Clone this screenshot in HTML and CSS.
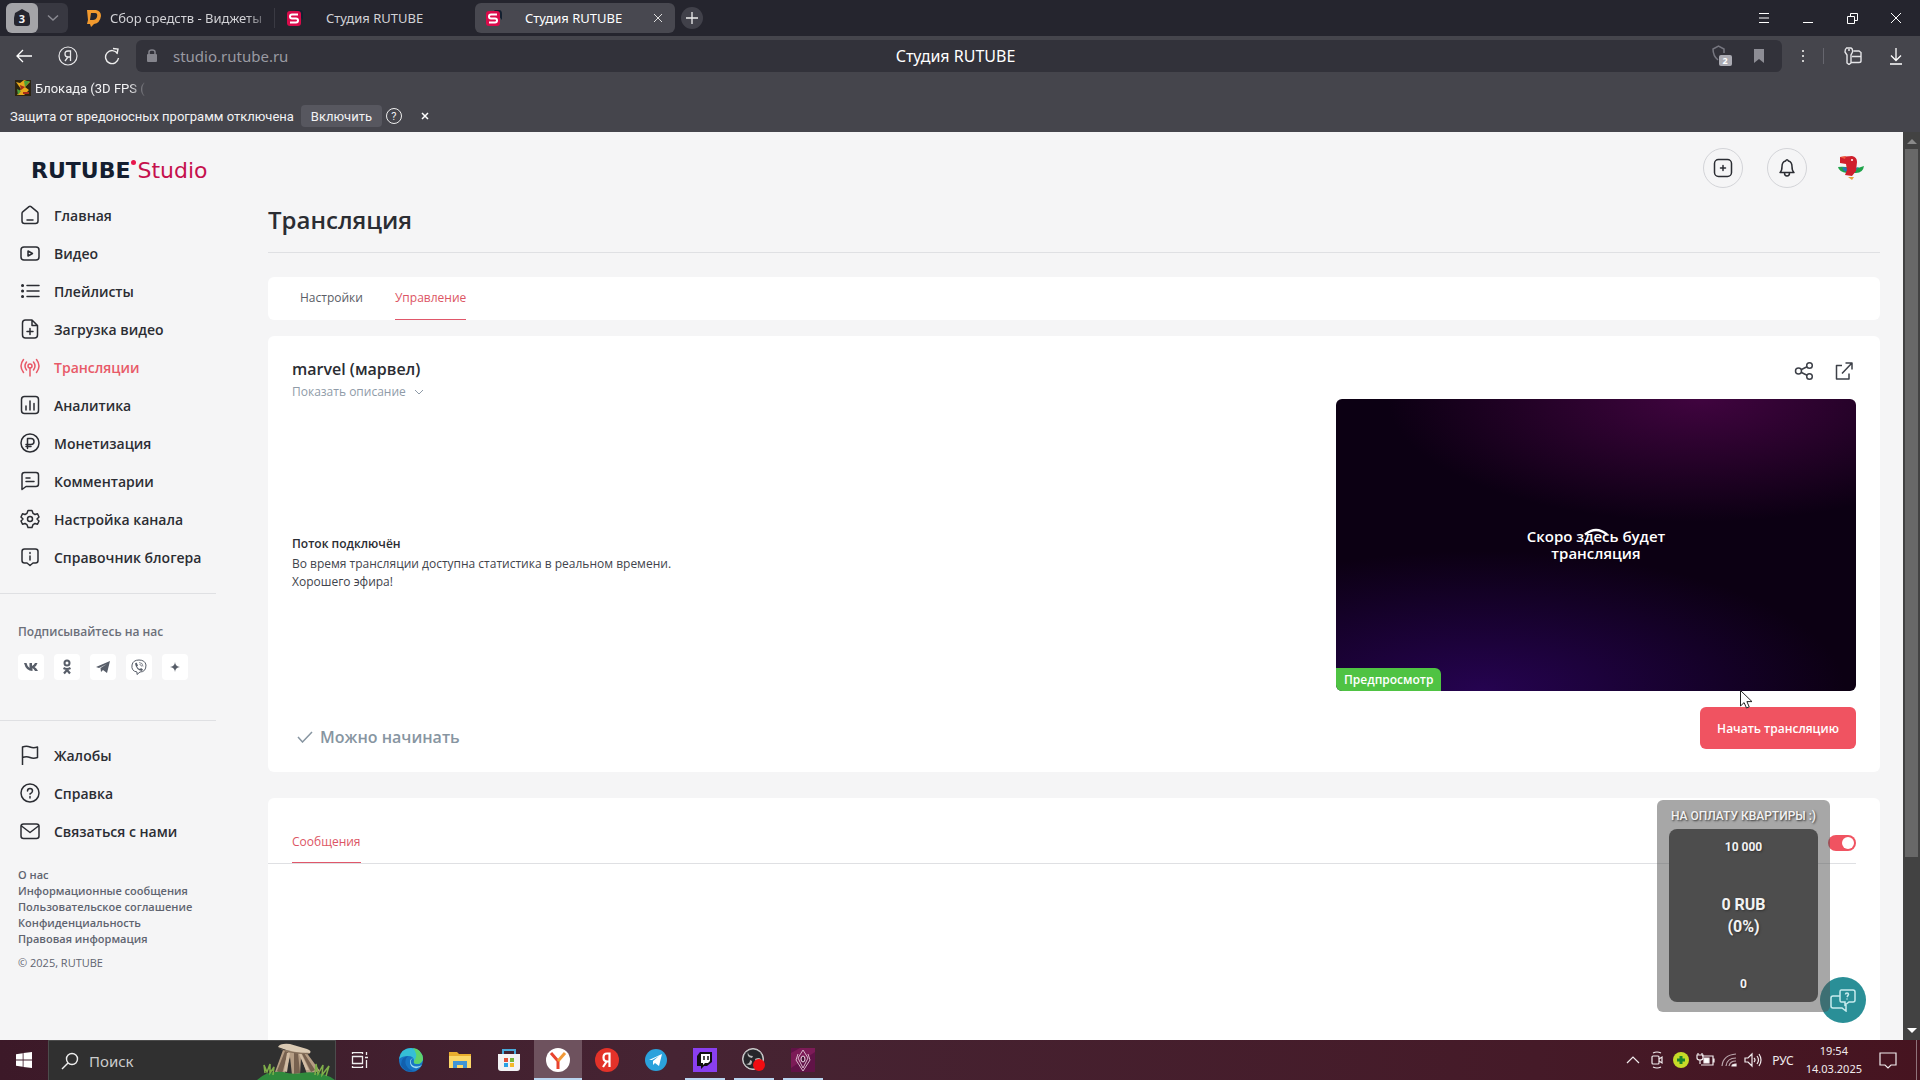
FILE: index.html
```html
<!DOCTYPE html>
<html lang="ru">
<head>
<meta charset="utf-8">
<title>Студия RUTUBE</title>
<link rel="stylesheet" href="styles.css">
</head>
<body>
<div class="screen">
<header class="browser">
  <div class="tabbar">
    <div class="tab-group">
      <button class="group-count" aria-label="Вкладки"><svg width="18" height="18" viewBox="0 0 18 18"><path d="M9 0l7 4 1 5v5q0 3-3 3H4q-3 0-3-3V9l1-5z" fill="#25252e"/></svg><b>3</b></button>
      <button class="group-more" aria-label="Список"><svg width="12" height="8" viewBox="0 0 12 8"><path d="M1 1.500l5 4.500 5-4.500" fill="none" stroke="#8a8a92" stroke-width="1.500"/></svg></button>
    </div>
    <a class="tab tab-first" href="#"><svg width="16" height="18" viewBox="0 0 16 18"><path d="M1 1h9q5 1 5 6-1 7-7 8l-3 3-1-3H1l1-4z" fill="#f29a2e"/><path d="M5 4h4q3 0 2 4-1 3-4 3H4z" fill="#25252e"/></svg><span class="fade">Сбор средств - Виджеты</span></a>
    <a class="tab tab-second" href="#"><svg width="16" height="16" viewBox="0 0 16 16"><path d="M8 0h5q3 0 3 4v6z" fill="#142030"/><rect y="1" width="14" height="15" rx="3" fill="#d90b4b"/><path d="M11 5H5q-2 0-2 2t2 2h4q2 0 2 2t-2 2H3" transform="translate(0 -.5)" fill="none" stroke="#fff" stroke-width="2"/></svg><span>Студия RUTUBE</span></a>
    <div class="tab tab-active"><svg width="16" height="16" viewBox="0 0 16 16"><path d="M8 0h5q3 0 3 4v6z" fill="#142030"/><rect y="1" width="14" height="15" rx="3" fill="#d90b4b"/><path d="M11 5H5q-2 0-2 2t2 2h4q2 0 2 2t-2 2H3" transform="translate(0 -.5)" fill="none" stroke="#fff" stroke-width="2"/></svg><span>Студия RUTUBE</span><button aria-label="Закрыть вкладку"><svg width="8" height="8" viewBox="0 0 8 8"><path d="M0 0l8 8M8 0L0 8" stroke="#ddd"/></svg></button></div>
    <button class="new-tab" aria-label="Новая вкладка"><svg width="12" height="12" viewBox="0 0 12 12"><path d="M6 0v12M0 6h12" stroke="#eee" stroke-width="1.300"/></svg></button>
    <div class="window-buttons">
      <button aria-label="Меню"><svg width="12" height="12" viewBox="0 0 12 12"><path d="M1 1.500h10M1 6h10M1 10.500h10" stroke="#fff"/></svg></button>
      <button aria-label="Свернуть"><svg width="12" height="12" viewBox="0 0 12 12"><path d="M1 10.500h10" stroke="#fff"/></svg></button>
      <button aria-label="Развернуть"><svg width="12" height="12" viewBox="0 0 12 12"><path d="M1.500 4.500h7v7h-7zM4.500 4V1.500h7v7H9" fill="none" stroke="#fff"/></svg></button>
      <button aria-label="Закрыть"><svg width="12" height="12" viewBox="0 0 12 12"><path d="M1 1l10 10M11 1L1 11" stroke="#fff"/></svg></button>
    </div>
  </div>
  <div class="toolbar">
    <button aria-label="Назад"><svg width="16" height="14" viewBox="0 0 16 14"><path d="M16 7H1.500M7 1L1 7l6 6" fill="none" stroke="#fff" stroke-width="1.300"/></svg></button>
    <button aria-label="Яндекс"><svg width="20" height="20" viewBox="0 0 20 20"><circle cx="10" cy="10" r="9" fill="none" stroke="#e8e8ea" stroke-width="1.200"/><path d="M12.500 15V5H10q-3 0-3 3t3 3h2.500M10 11l-3 4" fill="none" stroke="#e8e8ea" stroke-width="1.300"/></svg></button>
    <button aria-label="Обновить"><svg width="16" height="18" viewBox="0 0 16 18"><path d="M13.500 6A6.500 6.500 0 1 0 14.500 10.500M9 1l5 .5-1 5" transform="translate(0 .5)" fill="none" stroke="#eee" stroke-width="1.400"/></svg></button>
    <div class="address">
      <div class="url">
        <svg width="10" height="14" viewBox="0 0 10 14"><rect y="5" width="10" height="8" rx="1" fill="#85858d"/><path d="M2 6V3q0-2 3-2t3 2v3" fill="none" stroke="#85858d" stroke-width="1.500"/></svg>
        <input aria-label="Адрес" value="studio.rutube.ru">
      </div>
      <span class="page-name">Студия RUTUBE</span>
      <div class="address-icons">
        <svg width="20" height="22" viewBox="0 0 20 22"><path d="M6 15Q1 11 1 4l5.500-3L12 4v4" fill="none" stroke="#777780" stroke-width="1.500"/><rect x="7" y="10" width="13" height="11" rx="2" fill="#aaaab2"/><text x="13" y="19" font-size="9" font-weight="700" text-anchor="middle" fill="#fff">2</text></svg>
        <svg width="10" height="14" viewBox="0 0 10 14"><path d="M0 0h10v14l-5-4-5 4z" fill="#8d8d95"/></svg>
      </div>
    </div>
    <div class="toolbar-right">
      <svg width="4" height="14" viewBox="0 0 4 14"><path d="M1 1h2v2H1zM1 6h2v2H1zM1 11h2v2H1z" fill="#ccc"/></svg>
      <i></i>
      <svg class="tool-a" width="18" height="18" viewBox="0 0 18 18"><path d="M2.500 1h4.500q2 1 1.500 4L7 8v8l-2 1.500L3 16V8L1 5q0-3 1.500-4zM4 3h2M9.500 4H15l2 1.500V14q0 1.500-2 1.500H7.500M8 9.500h9" fill="none" stroke="#e5e5e8" stroke-width="1.400"/></svg>
      <svg class="tool-b" width="14" height="18" viewBox="0 0 14 18"><path d="M7 1v12M2 8.500l5 5 5-5M1 17h12" fill="none" stroke="#fff" stroke-width="1.300"/></svg>
    </div>
  </div>
  <div class="bookmarks">
    <svg width="16" height="16" viewBox="0 0 16 16"><path d="M0 0h16v16H0z" fill="#2c2412"/><path d="M1 2l4 1 4-3 6 2-5 5 4 3-5 5H2l4-6z" fill="#e8a81c"/><path d="M9 1h6l-5 6zM2 9l4 2-3 4z" fill="#4da03a"/><path d="M5 5l5 2-4 3zM8 12h6v2H8z" fill="#a82c18"/></svg>
    <a class="fade" href="#">Блокада (3D FPS (</a>
  </div>
  <div class="notice">
    <span>Защита от вредоносных программ отключена</span>
    <button class="enable">Включить</button>
    <button class="help" aria-label="Помощь">?</button>
    <button class="dismiss" aria-label="Закрыть"><svg width="8" height="8" viewBox="0 0 8 8"><path d="M1 1l6 6M7 1L1 7" stroke="#fff" stroke-width="1.500"/></svg></button>
  </div>
</header>

<div class="page">
  <aside class="sidebar">
    <a class="logo" href="#"><b>RUTUBE</b><i></i><span>Studio</span></a>
    <nav class="nav">
      <a href="#"><svg viewBox="0 0 20 20"><path d="M2 8.500q0-1 1-1.800l6-5q1-.8 2 0l6 5q1 .8 1 1.800V16q0 2.500-2.500 2.500h-11Q2 18.500 2 16zM7 15h6"/></svg>Главная</a>
      <a href="#"><svg viewBox="0 0 20 20"><rect x="1" y="4" width="18" height="13" rx="3"/><path d="M8 8v5l4.500-2.500z"/></svg>Видео</a>
      <a href="#"><svg viewBox="0 0 20 20"><path d="M7 4.500h12M7 10h12M7 15.500h12"/><path d="M2.500 4.500h.1M2.500 10h.1M2.500 15.500h.1" stroke-width="3"/></svg>Плейлисты</a>
      <a href="#"><svg viewBox="0 0 20 20"><path d="M12 1H5.500Q2.500 1 2.500 4v12q0 3 3 3h9q3 0 3-3V6.500zM12 1v5.500h5.500M10 9.500v6M7 12.500h6"/></svg>Загрузка видео</a>
      <a class="current" href="#"><svg viewBox="0 0 20 20"><circle cx="10" cy="9" r="2"/><path d="M10 11v8M6.500 13q-3-4 0-8M13.500 13q3-4 0-8M3.500 15.500q-5-6.500 0-13M16.500 15.500q5-6.500 0-13"/></svg>Трансляции</a>
      <a href="#"><svg viewBox="0 0 20 20"><rect x="1.500" y="1.500" width="17" height="17" rx="3"/><path d="M6 11v4M10 6v9M14 8.500V15"/></svg>Аналитика</a>
      <a href="#"><svg viewBox="0 0 20 20"><circle cx="10" cy="10" r="9"/><path d="M7.500 15.500v-10h3.500q3 0 3 3t-3 3H6M6 13.500h5"/></svg>Монетизация</a>
      <a href="#"><svg viewBox="0 0 20 20"><path d="M2 18.500V4q0-2.500 2.500-2.500h11.500q2.500 0 2.500 2.500v9q0 2.500-2.500 2.500H6zM6 7h4M6 10.500h8"/></svg>Комментарии</a>
      <a href="#"><svg viewBox="0 0 20 20"><circle cx="10" cy="10" r="2.500"/><path d="M8 1.500h4l1 2.800 2 1.200 2.500-.8L19 8l-2 2 2 2-1.500 3.300-2.500-.8-2 1.200-1 2.800H8l-1-2.800-2-1.200-2.500.8L1 12l2-2-2-2 1.500-3.300 2.500.8 2-1.200z"/></svg>Настройка канала</a>
      <a href="#"><svg viewBox="0 0 20 20"><path d="M4.500 2h11Q18 2 18 4.500v9q0 2.500-2.500 2.500H13l-3 2.500L7 16H4.500Q2 16 2 13.500v-9Q2 2 4.500 2zM10 9v4M10 5.500v1"/></svg>Справочник блогера</a>
    </nav>
    <section class="follow">
      <p>Подписывайтесь на нас</p>
      <div class="social">
        <a href="#" aria-label="ВКонтакте"><svg viewBox="0 0 16 16"><path d="M1 4h2.500q1 4 3 5V4H9v3q2-1 3-3h2.500q-1 3-3 4 2 1 3.500 4h-3q-1-2-2.500-3v3Q3 12 1 4z"/></svg></a>
        <a href="#" aria-label="Одноклассники"><svg viewBox="0 0 16 16"><circle cx="8" cy="4" r="2.500" fill="none" stroke="#575d68" stroke-width="2"/><path d="M4.500 9q3.500 2 7 0M5 14.500l3-3.500 3 3.500" fill="none" stroke="#575d68" stroke-width="2.200"/></svg></a>
        <a href="#" aria-label="Telegram"><svg viewBox="0 0 16 16"><path d="M1 8l14-6-3 12-4-3-2 2-.5-4L12 5 4 9z"/></svg></a>
        <a href="#" aria-label="Viber"><svg viewBox="0 0 16 16"><path d="M8 1q6 0 7 5 0 7-6 7l-3 2.500V13Q0 12 1 6 2 1 8 1z" fill="none" stroke="#575d68"/><path d="M4 4.500l1.500-1 1.500 3-1 1q1 2 3 2.500l1-1 2 1.500-1 1.500q-6-1-7-7.500z"/><path d="M8 3.500q4 0 4 4M8.500 5.500q2 0 2 2" fill="none" stroke="#575d68" stroke-width=".7"/></svg></a>
        <a href="#" aria-label="Дзен"><svg viewBox="0 0 16 16"><path d="M8 3q.3 4.700 5 5-4.700.3-5 5-.3-4.700-5-5 4.700-.3 5-5z"/></svg></a>
      </div>
    </section>
    <nav class="nav nav-help">
      <a href="#"><svg viewBox="0 0 20 20"><path d="M2.500 20V2q4-1.500 7.500 0t7.500 0v10.500q-4 1.500-7.500 0t-7.500 0"/></svg>Жалобы</a>
      <a href="#"><svg viewBox="0 0 20 20"><circle cx="10" cy="10" r="9"/><path d="M7.500 8q0-2.500 2.500-2.500T12.500 8q0 1.500-2.500 3M10 13.500v1.500"/></svg>Справка</a>
      <a href="#"><svg viewBox="0 0 20 20"><rect x="1" y="3" width="18" height="14.500" rx="2.500"/><path d="M1.500 5l8.500 6.500L18.500 5"/></svg>Связаться с нами</a>
    </nav>
    <footer class="legal">
      <a href="#">О нас</a><a href="#">Информационные сообщения</a><a href="#">Пользовательское соглашение</a><a href="#">Конфиденциальность</a><a href="#">Правовая информация</a>
      <p>© 2025, RUTUBE</p>
    </footer>
  </aside>

  <main class="main">
    <div class="account">
      <button aria-label="Добавить"><svg width="20" height="20" viewBox="0 0 20 20"><rect x="1.500" y="1.500" width="17" height="17" rx="4"/><path d="M10 7.500v5M7.500 10h5"/></svg></button>
      <button aria-label="Уведомления"><svg width="20" height="20" viewBox="0 0 20 20"><path d="M3 14.500q2-1.500 2-6 0-4.500 3.500-5.500Q10 .5 11.500 3 15 4 15 8.500q0 4.500 2 6zM7.500 15q0 3 2.500 3t2.500-3"/></svg></button>
      <a href="#" aria-label="Профиль"><svg width="28" height="26" viewBox="0 0 28 26"><path d="M1 12q6-1 12 1 7 1 14-2-1 7-8 7h-9q-8-1-9-6z" fill="#1fa34a"/><path d="M5 12l6 1 1 4-5-1z" fill="#2775b8"/><path d="M17 13l5-1-4 5z" fill="#1d8f9a"/><path d="M3 2l12-1q5 1 5 6l-1 9-4 5-7-1 2-5-1-6-6-1z" fill="#cf1f2c"/><path d="M3 2l6-1-1 3z" fill="#f05a3c"/><circle cx="15" cy="5" r="1" fill="#fff"/><path d="M11 22l6 0-2 3z" fill="#e9a13a"/></svg></a>
    </div>
    <h1>Трансляция</h1>
    <nav class="tabs"><a href="#">Настройки</a><a class="selected" href="#">Управление</a></nav>
    <section class="card stream">
      <div class="info">
        <h2>marvel (марвел)</h2>
        <button class="description">Показать описание <svg width="10" height="6" viewBox="0 0 10 6"><path d="M1 1l4 4 4-4" fill="none" stroke="#8f9ba8"/></svg></button>
        <div class="status"><b>Поток подключён</b><p>Во время трансляции доступна статистика в реальном времени.<br>Хорошего эфира!</p></div>
        <p class="ready"><svg width="16" height="12" viewBox="0 0 16 12"><path d="M1 6l4.500 5L15 1" fill="none" stroke="#8795a1" stroke-width="1.500"/></svg>Можно начинать</p>
      </div>
      <div class="preview">
        <div class="share">
          <button aria-label="Поделиться"><svg width="20" height="20" viewBox="0 0 20 20"><circle cx="4.500" cy="10" r="3"/><circle cx="15.500" cy="4.500" r="2.800"/><circle cx="15.500" cy="15.500" r="2.800"/><path d="M7 8.700L13 5.800M7 11.300l6 2.900"/></svg></button>
          <button aria-label="Открыть"><svg width="20" height="20" viewBox="0 0 20 20"><path d="M8 4.500H2.500V18h12.500v-5.500M8 12.500L17.500 2.500M11.500 2h6.500v6.500"/></svg></button>
        </div>
        <div class="video">
          <p>Скоро здесь будет<br>трансляция</p>
          <svg class="spinner" width="26" height="8" viewBox="0 0 26 8"><path d="M2 6.500q11-9 22 0" fill="none" stroke="#fff" stroke-width="2.500"/></svg>
          <span class="badge">Предпросмотр</span>
        </div>
        <button class="start">Начать трансляцию</button>
        <svg class="cursor" width="13" height="19" viewBox="0 0 13 19"><path d="M.5.500V16l3.600-3.400L6.500 18l2.700-1.200L6.900 11.600H12z" fill="#fff" stroke="#222"/></svg>
      </div>
    </section>
    <section class="card chat">
      <div class="chat-head"><a href="#">Сообщения</a><label><input type="checkbox" checked aria-label="Чат"></label></div>
    </section>
  </main>

  <div class="scrollbar"><svg width="10" height="5" viewBox="0 0 10 5"><path d="M0 5l5-5 5 5z" fill="#8a8a8a"/></svg><div class="track"><div class="thumb"></div></div><svg width="10" height="5" viewBox="0 0 10 5"><path d="M0 0l5 5 5-5z" fill="#fff"/></svg></div>

  <button class="support" aria-label="Поддержка"><svg width="26" height="24" viewBox="0 0 26 24" fill="none" stroke="#c8ecee" stroke-width="1.500"><path d="M11 2h12q2 0 2 2v8q0 2-2 2h-4l-4 3v-3h-4q-1 0-1-2V4q0-2 1-2zM10 8H3Q1 8 1 10v8q0 2 2 2h9l4 3v-6"/><path d="M15.500 6.500q0-1.500 1.500-1.500t1.500 1.500L17 9M17 10.500v1"/></svg></button>
  <aside class="goal">
    <h3>НА ОПЛАТУ КВАРТИРЫ :)</h3>
    <div><span>10 000</span><strong>0 RUB<br>(0%)</strong><span>0</span></div>
  </aside>
</div>

<footer class="taskbar">
  <button class="win" aria-label="Пуск"><svg width="16" height="16" viewBox="0 0 16 16"><path d="M0 2.200l6.700-1V7.600H0zM7.500 1L16 0v7.600H7.500zM0 8.400h6.700v6.400L0 13.800zM7.500 8.400H16V16l-8.500-1.100z" fill="#fff"/></svg></button>
  <label class="search">
    <svg width="18" height="18" viewBox="0 0 18 18"><circle cx="11" cy="7" r="5.500" fill="none" stroke="#eee" stroke-width="1.400"/><path d="M7 11l-6 6" stroke="#eee" stroke-width="1.400"/></svg>
    <input placeholder="Поиск" aria-label="Поиск">
    <svg class="stone" width="78" height="38" viewBox="0 0 78 38"><path d="M26 8l-8 22 9 4 6-19 2 18h8l1-18 6 17 13-3L49 10z" fill="#b59d84"/><path d="M28 9l-8 20 5 3 6-22zM37 11l0 21 6-1-2-20zM45 12l9 18 4-2-11-17z" fill="#77614f"/><path d="M30 11l-3 18 3 1 3-19zM42 12l7 16 3 0-8-17z" fill="#d2bda4"/><path d="M21 5q2-4 12-3l17 5q5 2 3 4-18 0-32-6z" fill="#dbcab3"/><path d="M21 6q13 5 32 5 0 2-5 1-16 0-27-6z" fill="#85705c"/><path d="M0 38q10-10 26-8 10 3 18 1 20-3 34 7z" fill="#2f8a3c"/><path d="M8 31l-1-8 3 7 3-8v9l4-6-1 8M58 33l1-11 2 10 5-9-1 10 7-9-3 10" fill="none" stroke="#7fae4a" stroke-width="1.500"/></svg>
  </label>
  <div class="apps">
    <button class="task-view" aria-label="Задачи"><svg width="18" height="16" viewBox="0 0 18 16"><path d="M1.500 4.500h10v7h-10zM1.500 2V.5h10V2M1.500 14v1.500h10V14M15.500 0v3M15.500 8v8M14 5.500h3" fill="none" stroke="#eee" stroke-width="1.300"/></svg></button>
    <button aria-label="Edge"><svg width="24" height="24" viewBox="0 0 24 24"><circle cx="12" cy="12" r="12" fill="#1875c5"/><path d="M0 11Q2 0 12 0q11 1 12 11-1 5-6 5-4 0-3-3 0-5-6-5-6 0-9 3z" fill="#35bfd6"/><path d="M14 0q9 1 10 11-1 5-6 5-4 0-3-3 5-6-1-13z" fill="#5fd36b"/><path d="M9 8q-4 4-2 9 3 6 10 6-10 3-15-6 0-8 7-9z" fill="#1260ad"/><path d="M14 10q-4 3-1 7 4 3 10 0-3 4-7 3-5-1-5-6 0-3 3-4z" fill="#9bdcf2"/></svg></button>
    <button aria-label="Проводник"><svg width="22" height="18" viewBox="0 0 22 18"><path d="M0 1h8l2 2h12v14H0z" fill="#e9ad2e"/><path d="M0 5h22v12H0z" fill="#fbd768"/><path d="M4 17v-7h14v7h-4v-3H8v3z" fill="#3f94d6"/></svg></button>
    <button aria-label="Store"><svg width="24" height="24" viewBox="0 0 24 24"><path d="M6 7V2h12v5" fill="none" stroke="#49a9da" stroke-width="2"/><path d="M1 6h22v14q0 3-3 3H4q-3 0-3-3z" fill="#f2f2f4"/><path d="M7 10h4v4H7z" fill="#e2503a"/><path d="M13 10h4v4h-4z" fill="#78b83a"/><path d="M7 15h4v4H7z" fill="#2aa0e4"/><path d="M13 15h4v4h-4z" fill="#f3b928"/></svg></button>
    <button class="active" aria-label="Яндекс Браузер"><svg width="24" height="24" viewBox="0 0 24 24"><circle cx="12" cy="12" r="12" fill="#fff"/><path d="M5 5l7 8v8" fill="none" stroke="#e8432e" stroke-width="3"/><path d="M19 5l-7 8" stroke="#f29a38" stroke-width="3"/></svg></button>
    <button aria-label="Яндекс"><svg width="24" height="24" viewBox="0 0 24 24"><circle cx="12" cy="12" r="12" fill="#e33229"/><path d="M14.500 19V5.500H12q-3.500 0-3.500 4t4 4h2M12 13l-4 6" fill="none" stroke="#fff" stroke-width="2.200"/></svg></button>
    <button aria-label="Telegram"><svg width="22" height="22" viewBox="0 0 22 22"><circle cx="11" cy="11" r="11" fill="#2ba2dc"/><path d="M4 11l13-6-3 12-4-3-2 2v-4l6-5-7 4z" fill="#fff"/></svg></button>
    <button class="open" aria-label="Twitch"><svg width="24" height="24" viewBox="0 0 24 24"><path d="M0 0h24v24H0z" fill="#8a3ff0"/><path d="M7 4h12v10l-5 4h-3l-3 3v-3H4V8z" fill="#111"/><path d="M8 6h9v7l-2 2h-3l-2 2v-2H8z" fill="#fff"/><path d="M11 8v4M15 8v4" stroke="#111" stroke-width="1.500"/></svg></button>
    <button class="open" aria-label="OBS"><svg width="24" height="24" viewBox="0 0 24 24"><circle cx="11" cy="11" r="10.500" fill="#b8b8ba" stroke="#d0d0d0"/><circle cx="11" cy="11" r="9.500" fill="#26262a"/><path d="M10 10q-6-1-4-6 0 4 5 4zM13 11q6-3 7 3-3-3-6 0zM10 13q0 6-6 3 4 0 4-4z" fill="#b8b8b8"/><circle cx="17" cy="17" r="6" fill="#f00d12"/></svg></button>
    <button class="open" aria-label="Игра"><svg width="24" height="24" viewBox="0 0 24 24"><path d="M0 0h24v24H0z" fill="#611347"/><path d="M0 5L9 0h15v4L0 20z" fill="#7c1b57"/><path d="M12 2L7 10l5 10 5-10zM7 6l-2 6 7 11 7-11-2-6" fill="none" stroke="#d9b6cb"/><ellipse cx="12" cy="11" rx="2" ry="3" fill="#421034" stroke="#f4e2ee"/></svg></button>
  </div>
  <div class="tray">
    <svg viewBox="0 0 20 20"><path d="M4 13l6-6 6 6"/></svg>
    <svg viewBox="0 0 20 20"><rect x="5" y="6" width="7" height="8" rx="1"/><path d="M12 9l3-2v6l-3-2M6 3q4-2 8 0M6 17q4 2 8 0"/></svg>
    <svg viewBox="0 0 20 20"><circle cx="10" cy="10" r="8" fill="#c6db28" stroke="none"/><path d="M10 6v8M6 10h8" stroke="#19832c" stroke-width="3"/></svg>
    <svg viewBox="0 0 20 20"><path d="M7 6h11v9H6M18 9h1v3h-1M2 5h6v3q0 2-3 2t-3-2zM3 3v2M7 3v2M5 10v4"/><path d="M9 8h5v5H9z" fill="#fff"/></svg>
    <svg viewBox="0 0 20 20"><path d="M3 16Q4 5 17 4M7 16q1-8 10-8M10 16q1-5 7-5" stroke="#bda8ae"/><path d="M13 16q0-2 4-2v2z" fill="#fff"/></svg>
    <svg viewBox="0 0 20 20"><path d="M2 8h3l4-4v12l-4-4H2zM11 8q2 2 0 4M14 6q3 4 0 8M16 4q4 6 0 12"/></svg>
    <span class="lang">РУС</span>
    <time>19:54<br>14.03.2025</time>
    <svg class="message" viewBox="0 0 20 20"><path d="M2 3h16v12h-5l-3 3-3-3H2z"/></svg>
    <i></i>
  </div>
</footer>
</div>
</body>
</html>
```
FILE: styles.css
```css
* { box-sizing: border-box; }
body { margin: 0; font-family: "Open Sans", sans-serif; font-size: 12px; color: #2b2d33; }
h1, h2, h3, p { margin: 0; }
a { color: inherit; text-decoration: none; }
button { padding: 0; border: 0; background: none; color: inherit; font: inherit; display: flex; align-items: center; justify-content: center; }
input { font: inherit; color: inherit; border: 0; background: none; padding: 0; min-width: 0; outline: 0; }
svg { flex: none; display: block; }

.screen { height: 100vh; display: flex; flex-direction: column; overflow: hidden; }

/* Browser window */
.browser { background: #45454c; color: #f2f2f4; font-family: "Noto Sans", sans-serif; }
.tabbar { height: 36px; padding: 0 2px 0 6px; display: flex; align-items: center; background: #25252e; font-size: 13px; }
.tab-group { display: flex; width: 62px; height: 30px; border-radius: 6px; background: #383841; }
.group-count { position: relative; width: 32px; border-radius: 6px; background: #a4a4a8; }
.group-count b { position: absolute; font-size: 11px; }
.group-more { flex: 1; }
.tab { display: flex; align-items: center; height: 30px; color: #d2d2d6; }
.tab-first { width: 207px; padding-left: 18px; gap: 8px; border-right: 1px solid #3a3a43; height: 20px; }
.fade { overflow: hidden; white-space: nowrap; mask-image: linear-gradient(90deg, #000 84%, transparent); }
.tab-first .fade { width: 162px; }
.tab-second { width: 200px; padding-left: 12px; gap: 23px; }
.tab-active { width: 200px; padding: 0 13px 0 11px; gap: 23px; border-radius: 6px; background: #484850; color: #fff; }
.tab-active button { margin-left: auto; }
.new-tab { width: 22px; height: 22px; margin-left: 6px; border-radius: 50%; background: #41414a; }
.window-buttons { display: flex; margin-left: auto; }
.window-buttons button { width: 44px; height: 36px; }
.toolbar { height: 40px; display: flex; align-items: center; padding-left: 2px; }
.toolbar > button { width: 44px; height: 32px; }
.address { flex: 1; height: 32px; margin-left: 2px; padding: 0 18px 0 11px; border-radius: 6px; background: #32323a; display: grid; grid-template-columns: 1fr auto 1fr; align-items: center; font-size: 15px; }
.url { display: flex; align-items: center; gap: 16px; color: #9a9aa2; }
.page-name { color: #fff; font-size: 16px; }
.address-icons { display: flex; justify-content: flex-end; align-items: center; gap: 22px; }
.toolbar-right { width: 138px; display: flex; align-items: center; padding-left: 19px; }
.toolbar-right i { width: 1px; height: 16px; margin: 0 20px 0 18px; background: #66666e; }
.tool-b { margin-left: 27px; }
.bookmarks, .notice { font-family: "Roboto", sans-serif; font-size: 13px; }
.bookmarks { height: 24px; padding-left: 15px; display: flex; align-items: center; gap: 4px; }
.bookmarks .fade { width: 112px; }
.notice { height: 32px; padding-left: 10px; display: flex; align-items: center; }
.notice > span { min-width: 280px; }
.enable { width: 81px; height: 22px; margin-left: 7px; border-radius: 4px; background: #57575f; }
.help { width: 16px; height: 16px; margin-left: 4px; border: 1px solid #eee; border-radius: 50%; font-size: 11px; }
.dismiss { margin-left: 19px; }

/* Studio */
.page { flex: 1; min-height: 0; display: flex; position: relative; background: #f5f5f6; overflow: hidden; }
.sidebar { width: 216px; flex: none; }
.logo { display: flex; height: 64px; padding: 13px 0 0 31px; align-items: center; font: 22px "DejaVu Sans", sans-serif; color: #141e30; }
.logo span { color: #c5104d; }
.logo i { width: 5px; height: 5px; flex: none; margin: 0 1px 16px; border-radius: 50%; background: #e8174b; }
.nav { border-bottom: 1px solid #dfe0e3; padding-bottom: 17px; }
.nav a { display: flex; align-items: center; height: 38px; padding-left: 20px; gap: 14px; font-size: 14px; font-weight: 600; white-space: nowrap; }
.nav svg, .account button svg, .share svg { width: 20px; height: 20px; fill: none; stroke: currentColor; stroke-width: 1.500; stroke-linecap: round; stroke-linejoin: round; }
.nav .current { color: #e85a68; }
.follow { height: 127px; padding: 29px 0 0 18px; border-bottom: 1px solid #dfe0e3; color: #6b6f79; font-weight: 600; }
.follow p { line-height: 18px; }
.social { display: flex; gap: 10px; margin-top: 13px; }
.social a { width: 26px; height: 26px; border-radius: 4px; background: #fff; display: grid; place-items: center; }
.social svg { width: 16px; height: 16px; fill: #575d68; }
.nav-help { border: 0; padding: 15px 0 17px; }
.legal { padding-left: 18px; display: flex; flex-direction: column; font-size: 11px; line-height: 16px; color: #5f6470; font-weight: 600; white-space: nowrap; }
.legal p { margin-top: 8px; font-weight: 500; }

.main { flex: 1; min-width: 0; padding: 0 23px 0 52px; display: flex; flex-direction: column; position: relative; }
.account { display: flex; justify-content: flex-end; gap: 24px; padding: 16px 9px 0 0; height: 60px; }
.account > * { width: 40px; height: 40px; display: grid; place-items: center; }
.account button { border: 1px solid #d3d4d8; border-radius: 50%; }
h1 { font-size: 24px; line-height: 36px; font-weight: 600; padding: 10px 0 14px; border-bottom: 1px solid #dfe0e3; }
.tabs { margin-top: 24px; padding: 0 32px; height: 43px; display: flex; gap: 32px; background: #fff; border-radius: 6px; color: #5a5d66; }
.tabs a { line-height: 41px; }
.tabs .selected, .chat-head a { color: #dc5564; border-bottom: 1px solid #e0576a; }
.card { background: #fff; border-radius: 6px; padding: 0 24px; }
.stream { margin-top: 16px; display: flex; justify-content: space-between; padding-bottom: 23px; }
.info { display: flex; flex-direction: column; align-items: flex-start; padding-top: 21px; }
h2 { font-size: 16px; line-height: 24px; font-weight: 600; }
.description { line-height: 18px; color: #8f9ba8; gap: 8px; margin-top: 2px; }
.status { margin: auto 0; color: #41444c; line-height: 18px; }
.status b { display: block; font-weight: 600; margin-bottom: 2px; color: #2b2d33; }
.ready { display: flex; align-items: center; gap: 7px; padding-left: 5px; font-size: 16px; line-height: 24px; font-weight: 600; color: #8795a1; }
.preview { width: 520px; position: relative; }
.share { height: 63px; display: flex; justify-content: flex-end; align-items: center; gap: 20px; padding-top: 7px; padding-right: 2px; color: #3d4048; }
.share svg { stroke-linecap: butt; }
.video { position: relative; height: 292px; border-radius: 6px; overflow: hidden; display: grid; place-items: center; color: #fff; text-align: center; background: radial-gradient(ellipse 60% 42% at 70% 0, #40043f, transparent), radial-gradient(ellipse 70% 48% at 28% 100%, #250350, transparent), #0c0013; }
.video p { font-size: 15px; line-height: 17px; font-weight: 600; }
.spinner { position: absolute; left: calc(50% - 13px); top: 129px; }
.badge { position: absolute; left: 0; bottom: 0; padding: 0 8px; line-height: 23px; background: #4fc343; border-top-right-radius: 6px; font-weight: 600; }
.start { width: 156px; height: 42px; margin: 16px 0 0 auto; border-radius: 6px; background: #f05361; color: #fff; font-weight: 600; }
.cursor { position: absolute; left: 404px; top: 354px; }
.chat { flex: 1; margin-top: 26px; border-radius: 6px 6px 0 0; }
.chat-head { height: 66px; display: flex; align-items: flex-end; justify-content: space-between; border-bottom: 1px solid #dfe0e3; margin-left: -24px; padding-left: 24px; }
.chat-head a { line-height: 18px; padding-bottom: 11px; }
.chat-head label { padding-bottom: 12px; }
.chat-head input { appearance: none; display: flex; align-items: center; justify-content: flex-end; width: 28px; height: 16px; margin: 0; padding: 2px; border-radius: 8px; background: #f05361; }
.chat-head input::before { content: ""; width: 12px; height: 12px; border-radius: 50%; background: #fff; }
.scrollbar { width: 17px; padding: 7px 2px; display: flex; flex-direction: column; align-items: center; gap: 5px; background: #424242; }
.track { flex: 1; width: 100%; }
.thumb { height: 81%; background: #686868; }
.support { position: absolute; right: 54px; bottom: 17px; width: 46px; height: 46px; border-radius: 50%; background: #2a8f97; }
.goal { position: absolute; right: 90px; bottom: 28px; width: 173px; padding: 4px 12px 10px; border-radius: 6px; background: rgba(80, 80, 80, .5); color: #f2f2f2; text-align: center; font-family: "Roboto", sans-serif; text-shadow: 1px 1px 2px #333; }
.goal h3 { font-size: 12px; line-height: 25px; font-weight: 500; white-space: nowrap; }
.goal div { height: 173px; padding: 8px 0; display: flex; flex-direction: column; justify-content: space-between; border-radius: 8px; background: #4d4d4d; }
.goal span { font-size: 12px; line-height: 20px; font-weight: 700; }
.goal strong { font-size: 16px; line-height: 22px; font-weight: 700; }

/* Taskbar */
.taskbar { height: 40px; flex: none; display: flex; background: linear-gradient(90deg, #3c1928, #462433 35%, #451a28 80%, #461420); color: #f1ebed; font-family: "Noto Sans", sans-serif; }
.win { width: 48px; }
.search { width: 288px; padding-left: 12px; display: flex; align-items: center; gap: 10px; background: #303030; border: 1px solid #4c4c4c; border-bottom: 0; font-size: 15px; }
.search input { flex: 1; }
.search input::placeholder { color: #ccc; opacity: 1; }
.stone { align-self: flex-end; }
.apps { display: flex; gap: 1px; }
.apps button { width: 48px; border-bottom: 2px solid transparent; border-top: 2px solid transparent; }
.apps .task-view { width: 50px; padding-right: 2px; }
.apps .active { background: #6e525e; border-bottom-color: #b9d5f0; }
.apps .open { border-bottom-color: #b9d5f0; width: 40px; margin: 0 4px; }
.tray { margin-left: auto; display: flex; align-items: center; gap: 4px; padding-right: 3px; }
.tray svg { width: 20px; height: 20px; fill: none; stroke: #f1ebed; stroke-width: 1.200; }
.lang { margin-left: 5px; }
.tray time { margin: 0 12px 0 8px; text-align: center; font-size: 11px; line-height: 18px; }
.tray .message { margin-right: 14px; }
.tray i { width: 1px; height: 40px; background: #90727a; }
```
